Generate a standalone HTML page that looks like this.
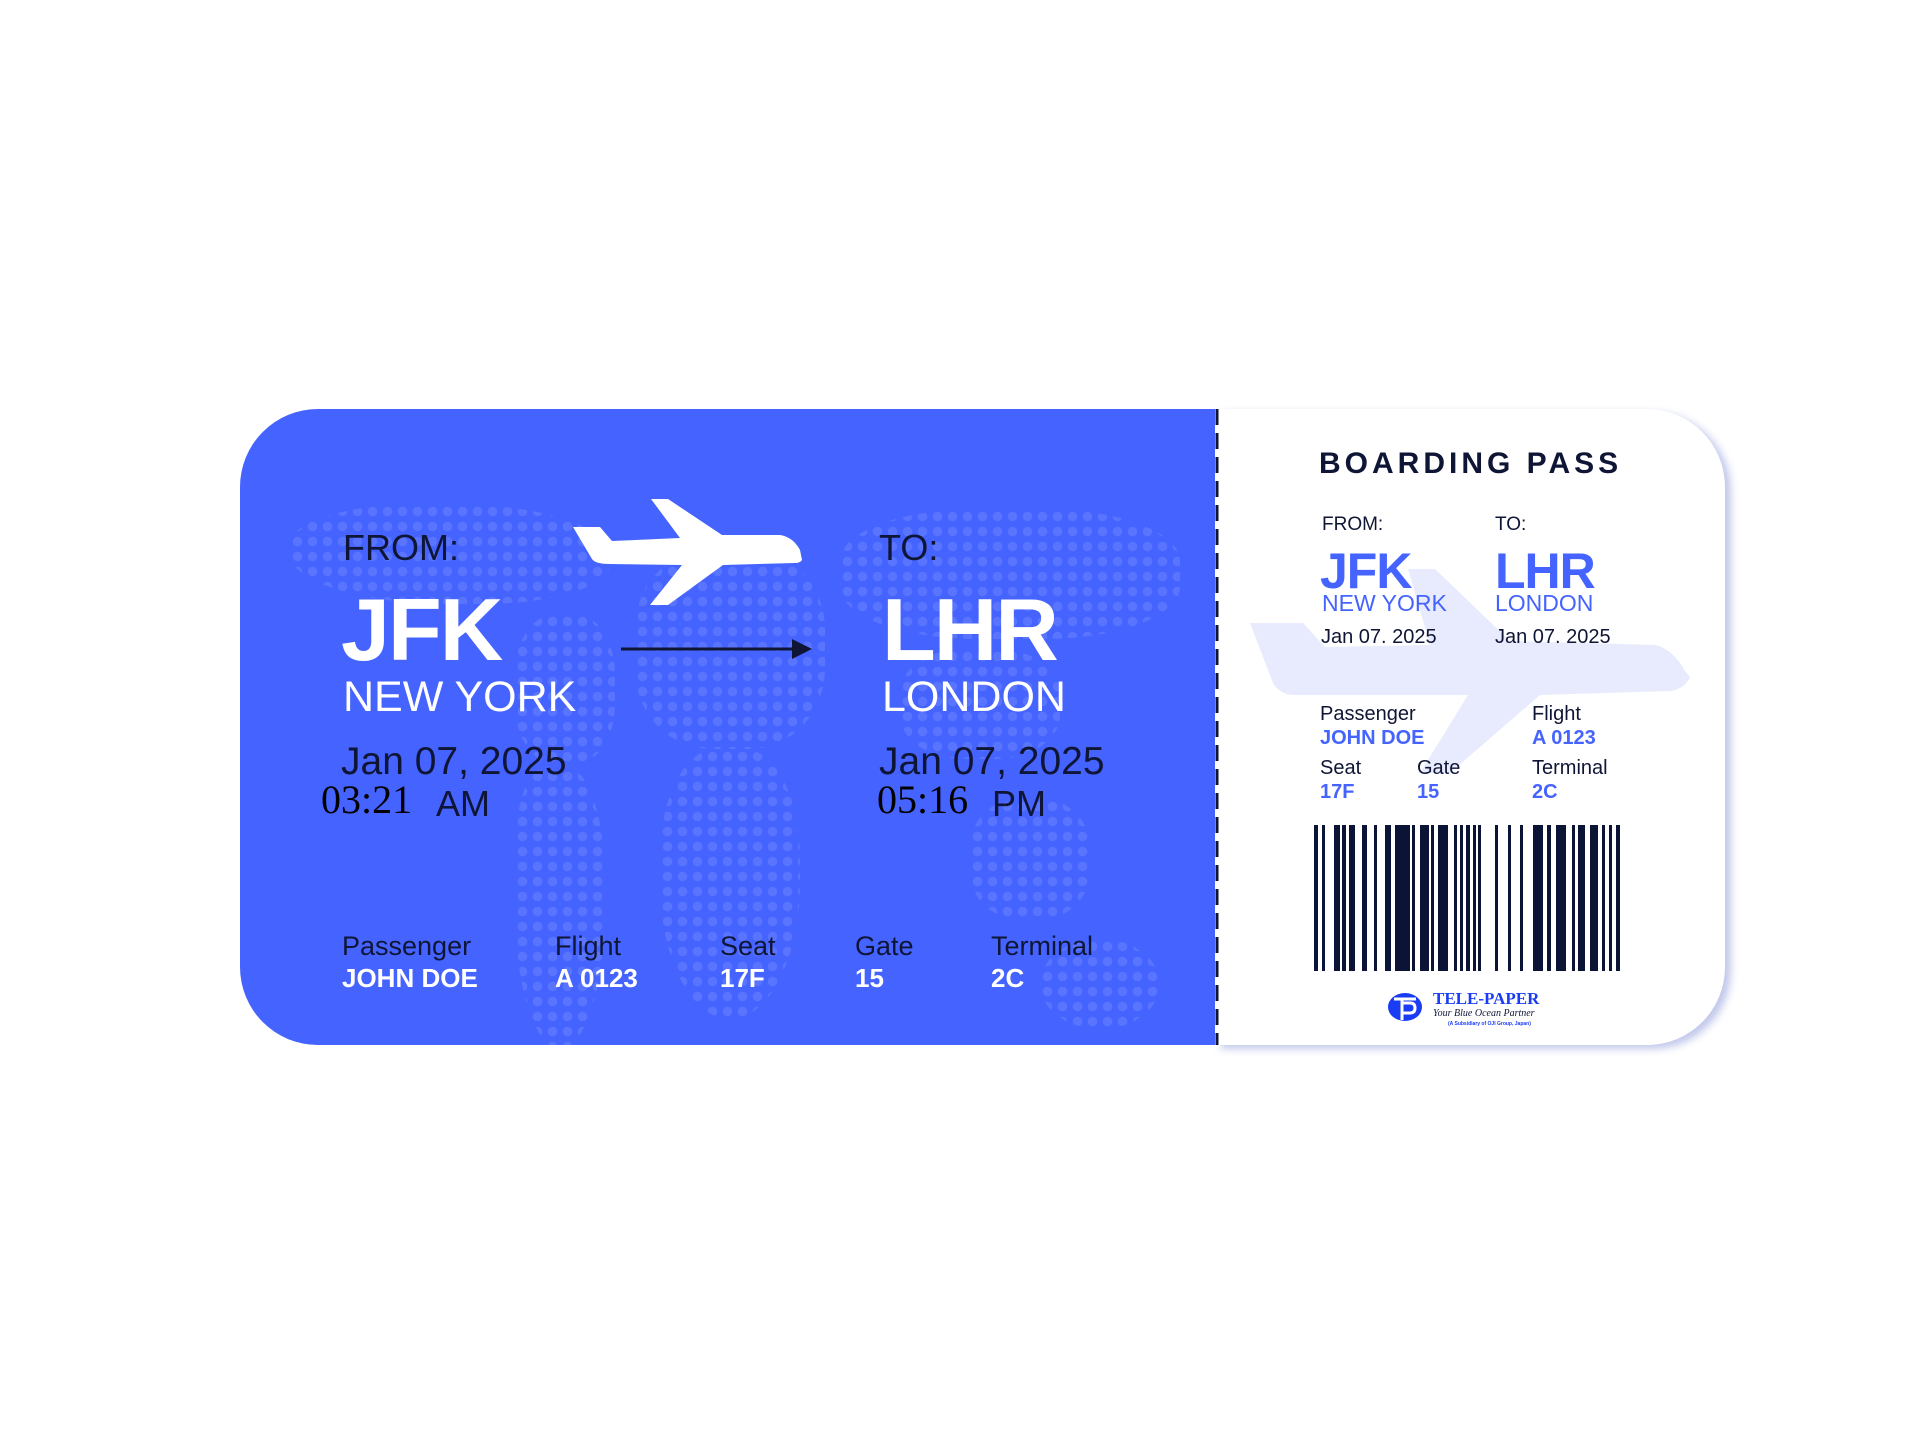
<!DOCTYPE html>
<html><head><meta charset="utf-8"><style>
*{margin:0;padding:0;box-sizing:border-box}
body{width:1920px;height:1440px;background:#fff;position:relative;overflow:hidden;font-family:"Liberation Sans",sans-serif}
.abs{position:absolute;white-space:nowrap}
.card{position:absolute;left:240px;top:409px;width:975px;height:636px;background:#4563fe;border-radius:78px 0 0 78px;overflow:hidden}
.stub{position:absolute;left:1215px;top:409px;width:510px;height:636px;background:#fff;border-radius:0 78px 78px 0;box-shadow:6px 4px 8px rgba(120,135,210,.45);overflow:hidden}
.dots{position:absolute;background-image:radial-gradient(circle,rgba(255,255,255,.11) 4.5px,transparent 5px);background-size:15px 15px}
.w{color:#fff}.d{color:#0f1535}
.blue{color:#4563fe}
</style></head><body>
<div class="card">
  <div class="dots" style="left:50px;top:95px;width:320px;height:100px;border-radius:40% 50% 40% 50%"></div>
  <div class="dots" style="left:275px;top:205px;width:100px;height:150px;border-radius:40%"></div>
  <div class="dots" style="left:275px;top:360px;width:90px;height:280px;border-radius:30% 40% 50% 50%"></div>
  <div class="dots" style="left:395px;top:140px;width:190px;height:200px;border-radius:40%"></div>
  <div class="dots" style="left:420px;top:340px;width:140px;height:270px;border-radius:40% 40% 50% 50%"></div>
  <div class="dots" style="left:600px;top:100px;width:340px;height:130px;border-radius:40%"></div>
  <div class="dots" style="left:660px;top:240px;width:160px;height:110px;border-radius:40%"></div>
  <div class="dots" style="left:730px;top:390px;width:120px;height:120px;border-radius:40%"></div>
  <div class="dots" style="left:800px;top:530px;width:120px;height:90px;border-radius:50%"></div>
  <svg class="abs" style="left:0;top:0" width="975" height="636">
    <path d="M333,118 L360,118 L372,132 L440,129 L411,90 L428,90 L482,126 L540,126 Q553,128 560,141 L562,151 Q560,154 555,154 L483,156 L428,196 L410,196 L442,156 L370,155 Q355,155 352,150 Z" fill="#fff"/>
    <line x1="381" y1="240" x2="560" y2="240" stroke="#0f1535" stroke-width="3"/>
    <path d="M552,230 L572,240 L552,250 Z" fill="#0f1535"/>
  </svg>
</div>
<div class="abs d" style="left:343px;top:527px;font-size:36px">FROM:</div>
<div class="abs w" style="left:341px;top:580px;font-size:88px;font-weight:bold;line-height:100px;letter-spacing:-2px">JFK</div>
<div class="abs w" style="left:343px;top:673px;font-size:43px">NEW YORK</div>
<div class="abs d" style="left:341px;top:740px;font-size:39px">Jan 07, 2025</div>
<div class="abs" style="left:321px;top:776px;font-size:40px;font-family:'Liberation Serif',serif;color:#000">03:21</div>
<div class="abs d" style="left:436px;top:783px;font-size:36px">AM</div>
<div class="abs d" style="left:879px;top:527px;font-size:36px">TO:</div>
<div class="abs w" style="left:882px;top:580px;font-size:88px;font-weight:bold;line-height:100px;letter-spacing:-2px">LHR</div>
<div class="abs w" style="left:882px;top:673px;font-size:43px">LONDON</div>
<div class="abs d" style="left:879px;top:740px;font-size:39px">Jan 07, 2025</div>
<div class="abs" style="left:877px;top:776px;font-size:40px;font-family:'Liberation Serif',serif;color:#000">05:16</div>
<div class="abs d" style="left:992px;top:783px;font-size:36px">PM</div>
<div class="abs d" style="left:342px;top:931px;font-size:27px">Passenger</div>
<div class="abs w" style="left:342px;top:963px;font-size:26px;font-weight:bold">JOHN DOE</div>
<div class="abs d" style="left:555px;top:931px;font-size:27px">Flight</div>
<div class="abs w" style="left:555px;top:963px;font-size:26px;font-weight:bold">A 0123</div>
<div class="abs d" style="left:720px;top:931px;font-size:27px">Seat</div>
<div class="abs w" style="left:720px;top:963px;font-size:26px;font-weight:bold">17F</div>
<div class="abs d" style="left:855px;top:931px;font-size:27px">Gate</div>
<div class="abs w" style="left:855px;top:963px;font-size:26px;font-weight:bold">15</div>
<div class="abs d" style="left:991px;top:931px;font-size:27px">Terminal</div>
<div class="abs w" style="left:991px;top:963px;font-size:26px;font-weight:bold">2C</div>

<div class="stub">
  <svg class="abs" style="left:0;top:0" width="510" height="636">
    <path d="M35,214 L88,214 L110,238 L215,236 L193,160 L220,160 L295,232 L440,236 Q458,240 470,262 L475,268 Q470,280 455,282 L325,286 L235,364 L205,364 L253,286 L80,286 Q65,286 58,274 Z" fill="#e7ebfd"/>
  </svg>
  <svg class="abs" style="left:0;top:0" width="4" height="636"><line x1="2" y1="0" x2="2" y2="636" stroke="#0f1535" stroke-width="3" stroke-dasharray="16 8"/></svg>
  <div class="abs d" style="left:104px;top:38px;font-size:30px;font-weight:bold;letter-spacing:4px">BOARDING PASS</div>
  <div class="abs d" style="left:107px;top:105px;font-size:19px">FROM:</div>
  <div class="abs d" style="left:280px;top:105px;font-size:19px">TO:</div>
  <div class="abs blue" style="left:105px;top:133px;font-size:50px;font-weight:bold;letter-spacing:-1px">JFK</div>
  <div class="abs blue" style="left:280px;top:133px;font-size:50px;font-weight:bold;letter-spacing:-1px">LHR</div>
  <div class="abs blue" style="left:107px;top:181px;font-size:23px">NEW YORK</div>
  <div class="abs blue" style="left:280px;top:181px;font-size:23px">LONDON</div>
  <div class="abs d" style="left:106px;top:217px;font-size:20px">Jan 07. 2025</div>
  <div class="abs d" style="left:280px;top:217px;font-size:20px">Jan 07. 2025</div>
  <div class="abs d" style="left:105px;top:294px;font-size:20px">Passenger</div>
  <div class="abs blue" style="left:105px;top:318px;font-size:20px;font-weight:bold">JOHN DOE</div>
  <div class="abs d" style="left:317px;top:294px;font-size:20px">Flight</div>
  <div class="abs blue" style="left:317px;top:318px;font-size:20px;font-weight:bold">A 0123</div>
  <div class="abs d" style="left:105px;top:348px;font-size:20px">Seat</div>
  <div class="abs blue" style="left:105px;top:372px;font-size:20px;font-weight:bold">17F</div>
  <div class="abs d" style="left:202px;top:348px;font-size:20px">Gate</div>
  <div class="abs blue" style="left:202px;top:372px;font-size:20px;font-weight:bold">15</div>
  <div class="abs d" style="left:317px;top:348px;font-size:20px">Terminal</div>
  <div class="abs blue" style="left:317px;top:372px;font-size:20px;font-weight:bold">2C</div>
  <svg class="abs" style="left:99px;top:416px" width="310" height="148" fill="#0b1437">
    <rect x="0" y="0" width="4" height="146"/><rect x="8" y="0" width="3" height="146"/>
    <rect x="20" y="0" width="6" height="146"/><rect x="28" y="0" width="4" height="146"/><rect x="35" y="0" width="6" height="146"/>
    <rect x="48" y="0" width="5" height="146"/><rect x="60" y="0" width="3" height="146"/>
    <rect x="71" y="0" width="6" height="146"/><rect x="81" y="0" width="15" height="146"/><rect x="98" y="0" width="3" height="146"/>
    <rect x="106" y="0" width="9" height="146"/><rect x="117" y="0" width="3" height="146"/><rect x="124" y="0" width="10" height="146"/>
    <rect x="140" y="0" width="3" height="146"/><rect x="146" y="0" width="3" height="146"/><rect x="152" y="0" width="4" height="146"/><rect x="159" y="0" width="3" height="146"/><rect x="164" y="0" width="3" height="146"/>
    <rect x="181" y="0" width="3" height="146"/><rect x="194" y="0" width="3" height="146"/><rect x="206" y="0" width="3" height="146"/>
    <rect x="219" y="0" width="10" height="146"/><rect x="233" y="0" width="4" height="146"/><rect x="242" y="0" width="10" height="146"/>
    <rect x="258" y="0" width="3" height="146"/><rect x="264" y="0" width="7" height="146"/><rect x="276" y="0" width="8" height="146"/>
    <rect x="288" y="0" width="3" height="146"/><rect x="295" y="0" width="3" height="146"/><rect x="302" y="0" width="4" height="146"/>
  </svg>
  <svg class="abs" style="left:171px;top:581px" width="40" height="36"><ellipse cx="19" cy="17" rx="17" ry="14" fill="#1a3cf5"/><path d="M8,9 H30 M16,9 V30 M16,13 H24 Q29,13 29,18 Q29,23 24,23 H16" stroke="#fff" stroke-width="3" fill="none"/></svg>
  <div class="abs" style="left:218px;top:580px;font-size:17px;font-weight:bold;font-family:'Liberation Serif',serif;color:#1a3cf5">TELE-PAPER</div>
  <div class="abs d" style="left:218px;top:599px;font-size:10px;font-style:italic;font-family:'Liberation Serif',serif">Your Blue Ocean Partner</div>
  <div class="abs" style="left:233px;top:612px;font-size:5px;font-weight:bold;color:#1a3cf5">(A Subsidiary of OJI Group, Japan)</div>
</div>
</body></html>
